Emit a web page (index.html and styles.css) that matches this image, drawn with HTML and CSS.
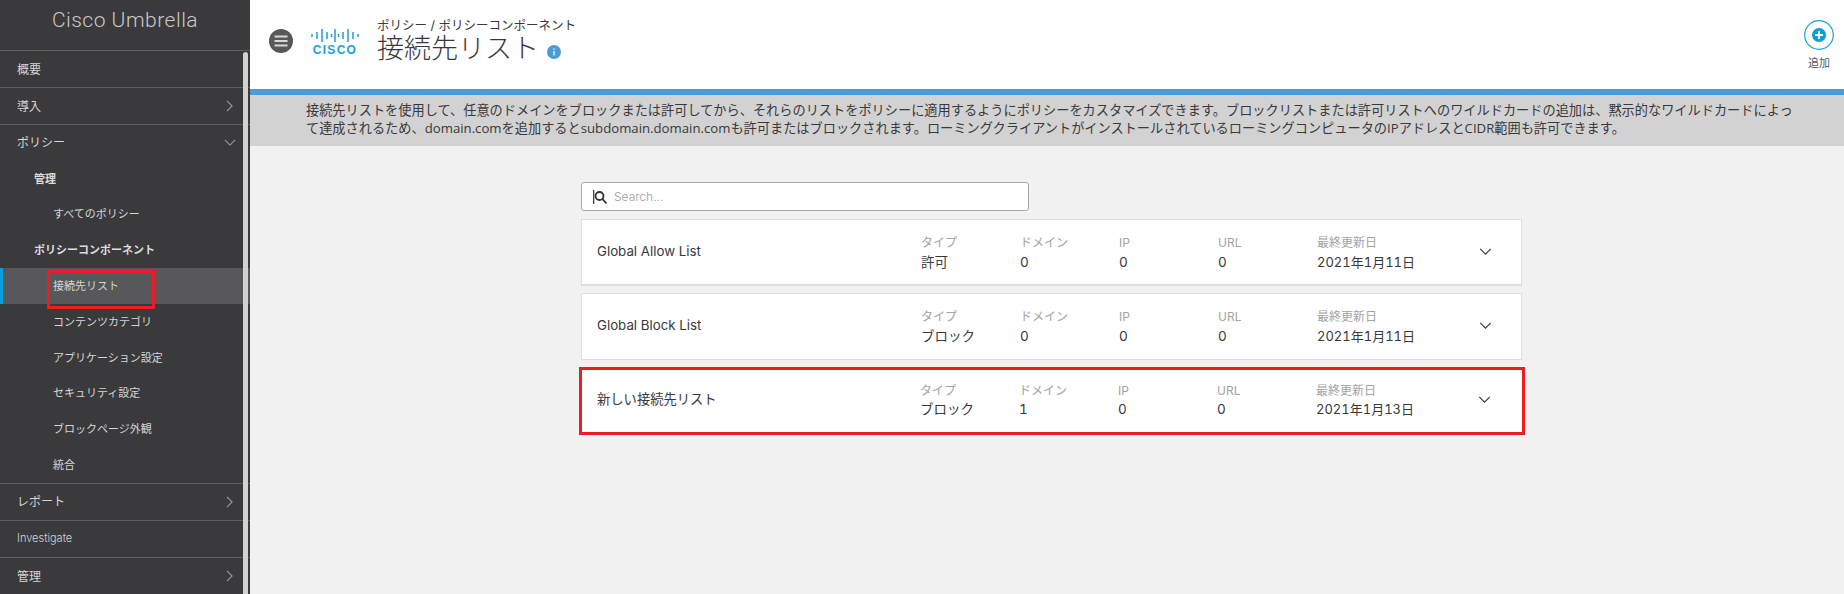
FILE: index.html
```html
<!DOCTYPE html>
<html lang="ja">
<head>
<meta charset="utf-8">
<title>接続先リスト</title>
<link rel="stylesheet" href="styles.css">
</head>
<body>
<aside class="sidebar">
  <div class="brand">Cisco Umbrella</div>
  <nav class="nav">
    <div class="nav-top">概要</div>
    <div class="nav-top">導入<svg class="chev-r" viewBox="0 0 8 14"><path d="M1 1l6 6-6 6"/></svg></div>
    <div class="nav-group">
      <div class="nav-sub nav-head">ポリシー<svg class="chev-d" viewBox="0 0 14 8"><path d="M1 1l6 6 6-6"/></svg></div>
      <div class="nav-sub nav-l2">管理</div>
      <div class="nav-sub nav-l3">すべてのポリシー</div>
      <div class="nav-sub nav-l2">ポリシーコンポーネント</div>
      <div class="nav-sub nav-l3 active"><span class="red-mark">接続先リスト</span></div>
      <div class="nav-sub nav-l3">コンテンツカテゴリ</div>
      <div class="nav-sub nav-l3">アプリケーション設定</div>
      <div class="nav-sub nav-l3">セキュリティ設定</div>
      <div class="nav-sub nav-l3">ブロックページ外観</div>
      <div class="nav-sub nav-l3">統合</div>
    </div>
    <div class="nav-top">レポート<svg class="chev-r" viewBox="0 0 8 14"><path d="M1 1l6 6-6 6"/></svg></div>
    <div class="nav-top nav-small">Investigate</div>
    <div class="nav-top">管理<svg class="chev-r" viewBox="0 0 8 14"><path d="M1 1l6 6-6 6"/></svg></div>
  </nav>
  <div class="scrollbar"></div>
</aside>
<main class="main">
  <header class="header">
    <svg class="menu-icon" viewBox="0 0 24 24"><circle cx="12" cy="12" r="12" fill="#58585b"/><path d="M5.500 7.500h13M5.500 12h13M5.500 16.500h13" stroke="#d8d8d8" stroke-width="2.200"/></svg>
    <div class="logo">
      <svg class="logo-bars" viewBox="0 0 48 13"><path d="M1 5v3M6 3v7M11 0v13M16 3v7M20.500 5v3M24 0v13M27.500 5v3M32 3v7M37 0v13M42 3v7M47 5v3" stroke="#1ba0d7" stroke-width="1.500" fill="none"/></svg>
      <span class="logo-text">CISCO</span>
    </div>
    <div class="titles">
      <div class="crumb">ポリシー / ポリシーコンポーネント</div>
      <h1 class="title">接続先リスト<svg class="info" viewBox="0 0 14 14"><circle cx="7" cy="7" r="7" fill="#4a9bd8"/><path d="M7 6v4.500M7 3.500v1.200" stroke="#fff" stroke-width="1.200"/></svg></h1>
    </div>
    <div class="add">
      <svg class="add-icon" viewBox="0 0 30 30"><circle cx="15" cy="15" r="14.300" fill="none" stroke="#1ba0d7" stroke-width="1.200"/><circle cx="15" cy="15" r="7" fill="#049fd9"/><path d="M11 15h8M15 11v8" stroke="#fff" stroke-width="1.800"/></svg>
      <span class="add-label">追加</span>
    </div>
  </header>
  <div class="desc">接続先リストを使用して、任意のドメインをブロックまたは許可してから、それらのリストをポリシーに適用するようにポリシーをカスタマイズできます。ブロックリストまたは許可リストへのワイルドカードの追加は、黙示的なワイルドカードによって達成されるため、domain.comを追加するとsubdomain.domain.comも許可またはブロックされます。ローミングクライアントがインストールされているローミングコンピュータのIPアドレスとCIDR範囲も許可できます。</div>
  <section class="content">
    <div class="search">
      <svg class="search-icon" viewBox="0 0 14 14"><path d="M.7 0v14" stroke="#333" stroke-width="1.200"/><circle cx="6.500" cy="6" r="4" fill="none" stroke="#333" stroke-width="1.800"/><path d="M9.500 9l4 4.500" stroke="#333" stroke-width="1.800"/></svg>
      <span class="search-ph">Search...</span>
    </div>
    <div class="list">
      <article class="card">
        <div class="card-name">Global Allow List</div>
        <div class="col"><span class="lbl">タイプ</span><span class="val">許可</span></div>
        <div class="col"><span class="lbl">ドメイン</span><span class="val">0</span></div>
        <div class="col"><span class="lbl">IP</span><span class="val">0</span></div>
        <div class="col"><span class="lbl">URL</span><span class="val">0</span></div>
        <div class="col col-date"><span class="lbl">最終更新日</span><span class="val val-date">2021年1月11日</span></div>
        <svg class="chev-card" viewBox="0 0 14 8"><path d="M1 1l6 6 6-6"/></svg>
      </article>
      <article class="card">
        <div class="card-name">Global Block List</div>
        <div class="col"><span class="lbl">タイプ</span><span class="val">ブロック</span></div>
        <div class="col"><span class="lbl">ドメイン</span><span class="val">0</span></div>
        <div class="col"><span class="lbl">IP</span><span class="val">0</span></div>
        <div class="col"><span class="lbl">URL</span><span class="val">0</span></div>
        <div class="col col-date"><span class="lbl">最終更新日</span><span class="val val-date">2021年1月11日</span></div>
        <svg class="chev-card" viewBox="0 0 14 8"><path d="M1 1l6 6 6-6"/></svg>
      </article>
      <article class="card card-marked">
        <div class="card-name">新しい接続先リスト</div>
        <div class="col"><span class="lbl">タイプ</span><span class="val">ブロック</span></div>
        <div class="col"><span class="lbl">ドメイン</span><span class="val">1</span></div>
        <div class="col"><span class="lbl">IP</span><span class="val">0</span></div>
        <div class="col"><span class="lbl">URL</span><span class="val">0</span></div>
        <div class="col col-date"><span class="lbl">最終更新日</span><span class="val val-date">2021年1月13日</span></div>
        <svg class="chev-card" viewBox="0 0 14 8"><path d="M1 1l6 6 6-6"/></svg>
      </article>
    </div>
  </section>
</main>
</body>
</html>
```
FILE: styles.css
```css
* { box-sizing: border-box; }
html, body { margin: 0; height: 594px; overflow: hidden; }
body {
  display: flex;
  font-family: Inter, "Noto Sans CJK JP", sans-serif;
  font-weight: 300;
  background: #f1f1f1;
  color: #39393b;
}
.sidebar {
  position: relative;
  flex: 0 0 250px;
  height: 594px;
  background: #3a3a3c;
  color: #d6d6d6;
  overflow: hidden;
}
.brand {
  height: 50px;
  padding-top: 6px;
  text-align: center;
  font-family: Roboto, sans-serif;
  font-weight: 300;
  font-size: 21px;
  line-height: 28px;
  color: #c9c9c9;
  letter-spacing: .5px;
}
.nav { border-top: 1px solid #5f5f61; }
.nav-top {
  position: relative;
  display: flex;
  align-items: center;
  height: 37px;
  padding: 0 0 2px 17px;
  font-size: 12px;
  font-weight: 400;
  border-bottom: 1px solid #5f5f61;
}
.nav-top:last-child { border-bottom: 0; }
.nav-small { font-size: 11px; font-weight: 300; }
.nav-group { border-bottom: 1px solid #5f5f61; }
.nav-sub {
  position: relative;
  display: flex;
  align-items: center;
  height: 35.8px;
  padding-bottom: 2px;
  font-size: 11px;
  font-weight: 400;
}
.nav-head { padding-left: 17px; font-size: 12px; }
.nav-l2 { padding-left: 34px; font-weight: 700; color: #dcdcdc; }
.nav-l3 { padding-left: 53px; }
.active {
  background: #58585a;
  border-left: 3px solid #049fd9;
  padding-left: 50px;
}
.red-mark {
  position: relative;
  display: block;
}
.red-mark::after {
  content: "";
  position: absolute;
  left: -6px;
  top: -7px;
  height: 33px;
  width: 102px;
  border: 3px solid #ed1c24;
}
.chev-r, .chev-d, .chev-card { fill: none; stroke-width: 1.300; }
.chev-r, .chev-d { stroke: #9a9a9c; }
.chev-r { position: absolute; left: 226px; top: 12px; width: 7px; height: 12px; }
.chev-d { position: absolute; left: 224px; top: 14px; width: 12px; height: 7px; }
.scrollbar {
  position: absolute;
  left: 243px;
  top: 52px;
  bottom: 0;
  width: 5px;
  background: #d2d2d2;
  border-radius: 3px 3px 0 0;
}
.main { flex: 1; display: flex; flex-direction: column; min-width: 0; }
.header {
  display: flex;
  align-items: flex-start;
  height: 95px;
  background: #fff;
  border-bottom: 6px solid #4a9bd8;
  padding: 0 10px 0 19px;
}
.menu-icon { width: 24px; height: 24px; margin-top: 29px; flex: none; }
.logo {
  display: flex;
  flex-direction: column;
  align-items: center;
  width: 50px;
  margin: 29px 0 0 17px;
  flex: none;
}
.logo-bars { width: 48px; height: 13px; display: block; }
.logo-text {
  margin-top: 1px;
  font-family: "Liberation Sans", sans-serif;
  font-weight: 700;
  font-size: 12px;
  line-height: 14px;
  letter-spacing: 1.3px;
  color: #1ba0d7;
}
.titles { margin-left: 17px; padding-top: 17px; }
.crumb { font-size: 12.500px; line-height: 17px; font-weight: 400; color: #39393b; }
.title {
  display: flex;
  align-items: center;
  margin: 0;
  font-size: 27px;
  font-weight: 300;
  line-height: 30px;
  color: #39393b;
}
.info { width: 14px; height: 14px; margin: 6px 0 0 8px; }
.add {
  margin-left: auto;
  display: flex;
  flex-direction: column;
  align-items: center;
  padding-top: 20px;
  width: 30px;
}
.add-icon { width: 30px; height: 30px; display: block; }
.add-label { font-size: 11px; line-height: 16px; margin-top: 5px; font-weight: 400; color: #58585b; white-space: nowrap; }
.desc {
  height: 51px;
  background: #d2d2d2;
  padding: 6px 44px 0 56px;
  font-family: "Open Sans", "Noto Sans CJK JP", sans-serif;
  font-weight: 400;
  font-size: 13.200px;
  line-height: 18px;
  color: #39393b;
}
.content { padding: 36px 0 0 331px; }
.search {
  display: flex;
  align-items: center;
  width: 448px;
  height: 29px;
  background: #fff;
  border: 1px solid #a9a9a9;
  border-radius: 3px;
  padding-left: 11px;
}
.search-icon { width: 14px; height: 14px; flex: none; }
.search-ph { margin-left: 7px; font-size: 12px; color: #a0a0a0; }
.list {
  display: flex;
  flex-direction: column;
  gap: 7px;
  width: 941px;
  margin-top: 8px;
}
.card {
  display: flex;
  align-items: flex-start;
  height: 67px;
  background: #fff;
  border: 1px solid #dfdfdf;
  border-bottom-width: 2px;
  padding-top: 14px;
}
.card:nth-child(2) { border-bottom-width: 1px; }
.card-name { flex: 0 0 339px; padding-left: 15px; margin-top: 5px; font-size: 13.300px; line-height: 24px; font-weight: 400; }
.col { flex: 0 0 99px; display: flex; flex-direction: column; }
.col-date { flex: 0 0 162px; }
.lbl { font-size: 12px; line-height: 18px; font-weight: 400; color: #a3a3a3; }
.val { font-size: 13.500px; line-height: 18px; font-weight: 400; font-variant-numeric: tabular-nums; color: #39393b; margin-top: 1px; white-space: nowrap; }
.val-date { font-size: 13px; }
.chev-card { width: 13px; height: 7px; margin-top: 14px; stroke: #39393b; flex: none; }
.card-marked {
  height: 68px;
  margin: 0 -3px 0 -2px;
  border: 3px solid #ed1c24;
  padding-top: 12px;
}
.card-marked .card-name { flex-basis: 338px; padding-left: 15px; margin-top: 5px; }
.card-marked .val { margin-top: 0; }
```
